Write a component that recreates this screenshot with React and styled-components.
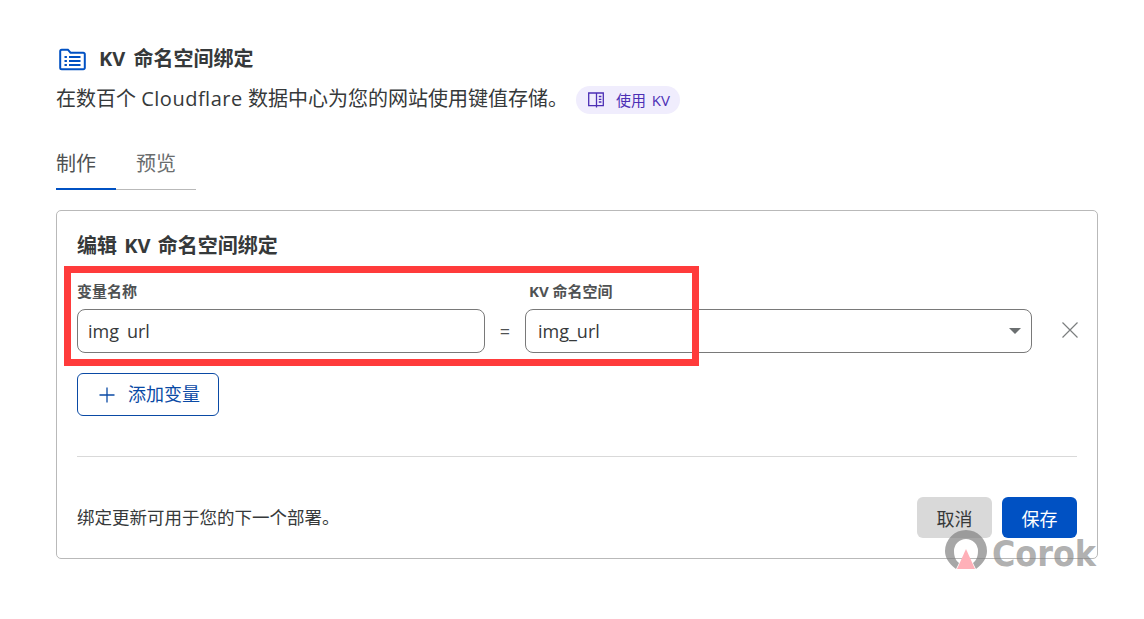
import React from "react";
import styled, { createGlobalStyle } from "styled-components";

const Global = createGlobalStyle`
  html, body { margin: 0; padding: 0; background: #fff; }
  body { font-family: "Open Sans", "Noto Sans CJK SC", sans-serif; color: #36393a; }
`;

const Page = styled.main`
  position: relative;
  width: 1144px;
  height: 619px;
  box-sizing: border-box;
  padding: 45px 46px 0 56px;
  overflow: hidden;
`;

const TitleRow = styled.div`
  display: flex;
  align-items: center;
  gap: 13px;
  height: 28px;
  padding-left: 3px;
`;

const Title = styled.h1`
  margin: 0;
  font-size: 20px;
  font-weight: 700;
  line-height: 28px;
  word-spacing: 3px;
  color: #36393a;
`;

const DescRow = styled.div`
  display: flex;
  align-items: center;
  gap: 8px;
  height: 28px;
  margin-top: 12px;
`;

const Desc = styled.p`
  margin: 0;
  font-size: 20px;
  line-height: 28px;
  color: #36393a;
`;

const LatinWord = styled.span`
  letter-spacing: 0.5px;
`;

const Pill = styled.a`
  box-sizing: border-box;
  display: inline-flex;
  align-items: center;
  gap: 12px;
  height: 28px;
  margin-top: 2px;
  padding: 0 10px 2px 12px;
  border-radius: 14px;
  background: #f0edfd;
  color: #4c2fb5;
  font-size: 15px;
  word-spacing: 2px;

  svg {
    margin-top: 2px;
  }
`;

const Tabs = styled.div`
  display: flex;
  width: 140px;
  height: 50px;
  margin-top: 26px;
  border-bottom: 1px solid #b9b9b9;
  box-sizing: content-box;
`;

const Tab = styled.div`
  width: ${(p) => p.$w}px;
  box-sizing: border-box;
  height: 51px;
  padding-top: 11px;
  font-size: 20px;
  line-height: 28px;
  color: ${(p) => (p.$active ? "#4f5253" : "#6a6d6e")};
  border-bottom: 2px solid ${(p) => (p.$active ? "#0051c3" : "transparent")};
  text-align: ${(p) => (p.$active ? "left" : "center")};
`;

const Card = styled.section`
  box-sizing: border-box;
  width: 1042px;
  height: 349px;
  margin-top: 20px;
  padding: 20px 20px 20px;
  border: 1px solid #b9b9b9;
  border-radius: 5px;
  display: flex;
  flex-direction: column;
`;

const CardTitle = styled.h2`
  margin: 0;
  font-size: 20px;
  font-weight: 700;
  line-height: 30px;
  word-spacing: 2px;
  color: #36393a;
`;

const Fields = styled.div`
  display: grid;
  grid-template-columns: 408px 40px 507px 1fr;
  margin-top: 21px;
  row-gap: 9px;
`;

const Label = styled.label`
  font-size: 15px;
  font-weight: 700;
  line-height: 18px;
  color: #4f5253;
  padding-left: ${(p) => p.$indent || 0}px;
`;

const Box = styled.div`
  box-sizing: border-box;
  height: 44px;
  padding-left: ${(p) => p.$pad}px;
  border: 1px solid #797979;
  border-radius: 8px;
  display: flex;
  align-items: center;
  justify-content: space-between;
  font-size: 18px;
  line-height: 22px;
  color: #36393a;
`;

/* The first field's underscore does not show in the picture. */
const HiddenChar = styled.span`
  color: transparent;
`;

const Equals = styled.div`
  display: flex;
  align-items: center;
  justify-content: center;
  font-size: 18px;
  color: #4f5253;
`;

const RemoveCell = styled.div`
  display: flex;
  align-items: center;
  justify-content: flex-end;
  margin-right: -2px;
  padding-bottom: 2px;
`;

const Caret = styled.span`
  width: 0;
  height: 0;
  margin-right: 10px;
  border-left: 6px solid transparent;
  border-right: 6px solid transparent;
  border-top: 6px solid #6b6f70;
`;

const AddButton = styled.button`
  box-sizing: border-box;
  display: inline-flex;
  align-items: center;
  justify-content: center;
  gap: 13px;
  align-self: flex-start;
  width: 142px;
  height: 43px;
  margin-top: 20px;
  padding: 0 0 0 3px;
  border: 1px solid #0a4aa5;
  border-radius: 6px;
  background: #fff;
  color: #0a4aa5;
  font: 400 18px "Open Sans", "Noto Sans CJK SC", sans-serif;
`;

const AddLabel = styled.span`
  margin-bottom: 3px;
`;

const Divider = styled.hr`
  width: 100%;
  height: 1px;
  margin: 40px 0 0;
  border: 0;
  background: #d9d9d9;
`;

const Footer = styled.div`
  display: flex;
  align-items: center;
  justify-content: space-between;
  margin-top: 40px;
`;

const Note = styled.span`
  margin-bottom: 2px;
  font-size: 17.5px;
  color: #36393a;
`;

const Actions = styled.div`
  display: flex;
  gap: 10px;
`;

const Action = styled.button`
  width: 75px;
  height: 41px;
  border: 0;
  border-radius: 6px;
  font: 400 18px "Open Sans", "Noto Sans CJK SC", sans-serif;
  background: ${(p) => (p.$primary ? "#0051c3" : "#d9d9d9")};
  color: ${(p) => (p.$primary ? "#fff" : "#36393a")};
`;

const Highlight = styled.div`
  position: absolute;
  left: 64px;
  top: 266px;
  width: 635px;
  height: 100px;
  box-sizing: border-box;
  border: 7px solid #ff3b3b;
  pointer-events: none;
`;

const Watermark = styled.div`
  position: absolute;
  left: 944px;
  top: 530px;
  display: flex;
  align-items: flex-start;
  gap: 4px;
  pointer-events: none;
`;

const WatermarkText = styled.span`
  font: 900 35px/38px "DejaVu Sans", sans-serif;
  color: rgba(125, 125, 125, 0.62);
  transform: scaleX(0.91);
  transform-origin: left center;
  margin-top: 5px;
`;

const ListIcon = () => (
  <svg width="27" height="23" viewBox="0 0 27 23" fill="none">
    <path d="M1.2 3.2a1.5 1.5 0 0 1 1.5-1.5h6.2l2.6 3h12.8a1.5 1.5 0 0 1 1.5 1.5v13.6a1.5 1.5 0 0 1-1.5 1.5H2.7a1.5 1.5 0 0 1-1.5-1.5z" stroke="#0051c3" strokeWidth="2" />
    <path d="M5.5 9h2.4M5.5 13h2.4M5.5 17h2.4M10 9h11.5M10 13h11.5M10 17h11.5" stroke="#0051c3" strokeWidth="1.8" />
  </svg>
);

const BookIcon = () => (
  <svg width="16" height="16" viewBox="0 0 16 16" fill="none" stroke="#4c2fb5" strokeWidth="1.3">
    <path d="M8.5 1H.7v12.6h7.8M8.5 1h6.8v12.6H8.5" />
    <path d="M8.5 1v14.6M10.8 4.5h2.6M10.8 7.3h2.6M10.8 10h2.6" />
  </svg>
);

const PlusIcon = () => (
  <svg width="16" height="16" viewBox="0 0 16 16" stroke="#0a4aa5" strokeWidth="1.3">
    <path d="M8 0.5v15M0.5 8h15" />
  </svg>
);

const CrossIcon = () => (
  <svg width="18" height="18" viewBox="0 0 18 18" stroke="#7b7e7f" strokeWidth="1.2">
    <path d="M1.5 1.5l15 15M16.5 1.5l-15 15" />
  </svg>
);

const WatermarkLogo = () => (
  <svg width="44" height="40" viewBox="0 0 44 40">
    <path d="M12 39C4 33 1 27 1 21a21 21 0 0 1 42 0c0 6-3 12-11 18l-3-6c4-3 5-8 5-12a12 12 0 0 0-24 0c0 4 1 9 5 12z" fill="rgba(125,125,125,0.68)" />
    <path d="M22 19l9 20H13z" fill="#ffb0b8" />
  </svg>
);

export default function App() {
  return (
    <Page>
      <Global />
      <TitleRow>
        <ListIcon />
        <Title>KV 命名空间绑定</Title>
      </TitleRow>
      <DescRow>
        <Desc>在数百个 <LatinWord>Cloudflare</LatinWord> 数据中心为您的网站使用键值存储。</Desc>
        <Pill>
          <BookIcon />
          使用 KV
        </Pill>
      </DescRow>
      <Tabs>
        <Tab $active $w={60}>制作</Tab>
        <Tab $w={80}>预览</Tab>
      </Tabs>
      <Card>
        <CardTitle>编辑 KV 命名空间绑定</CardTitle>
        <Fields>
          <Label>变量名称</Label>
          <span />
          <Label $indent={4}>KV 命名空间</Label>
          <span />
          <Box $pad={10}>
            <span>img<HiddenChar>_</HiddenChar>url</span>
          </Box>
          <Equals>=</Equals>
          <Box $pad={12}>
            <span>img_url</span>
            <Caret />
          </Box>
          <RemoveCell>
            <CrossIcon />
          </RemoveCell>
        </Fields>
        <AddButton>
          <PlusIcon />
          <AddLabel>添加变量</AddLabel>
        </AddButton>
        <Divider />
        <Footer>
          <Note>绑定更新可用于您的下一个部署。</Note>
          <Actions>
            <Action>取消</Action>
            <Action $primary>保存</Action>
          </Actions>
        </Footer>
      </Card>
      <Highlight />
      <Watermark>
        <WatermarkLogo />
        <WatermarkText>Corok</WatermarkText>
      </Watermark>
    </Page>
  );
}
